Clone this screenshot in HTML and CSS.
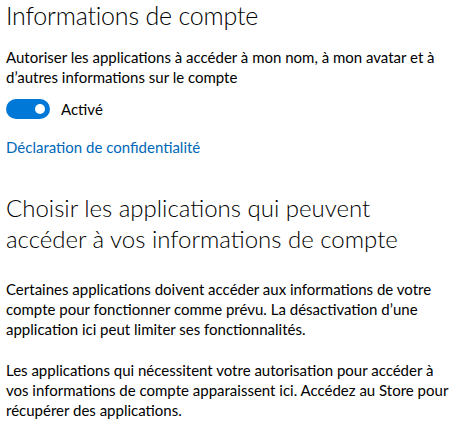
FILE: index.html
```html
<!DOCTYPE html>
<html lang="fr">
<head>
<meta charset="utf-8">
<link rel="stylesheet" href="styles.css">
</head>
<body>
<main class="page">
  <h1 class="title">Informations de compte</h1>
  <p class="text desc">Autoriser les applications à accéder à mon nom, à mon avatar et à d’autres informations sur le compte</p>
  <div class="toggle-row">
    <span class="toggle"><span class="knob"></span></span>
    <span class="toggle-label">Activé</span>
  </div>
  <a class="link" href="#">Déclaration de confidentialité</a>
  <h2 class="subtitle">Choisir les applications qui peuvent accéder à vos informations de compte</h2>
  <p class="text para1">Certaines applications doivent accéder aux informations de votre compte pour fonctionner comme prévu. La désactivation d’une application ici peut limiter ses fonctionnalités.</p>
  <p class="text para2">Les applications qui nécessitent votre autorisation pour accéder à vos informations de compte apparaissent ici. Accédez au Store pour récupérer des applications.</p>
</main>
</body>
</html>
```
FILE: styles.css
```css
html, body {
  margin: 0;
  padding: 0;
  background: #ffffff;
}
body {
  font-family: Lato, "Noto Sans", sans-serif;
  color: #000000;
}
.page {
  display: flex;
  flex-direction: column;
  align-items: flex-start;
  padding: 0 10px 0 6px;
  width: 444px;
}
.title {
  margin: 0;
  font-size: 25px;
  font-weight: 300;
  line-height: 30px;
  letter-spacing: -0.2px;
}
.text {
  margin: 0;
  font-size: 15px;
  line-height: 20px;
}
.desc {
  margin-top: 17px;
}
.toggle-row {
  display: flex;
  align-items: center;
  gap: 11px;
  margin-top: 12px;
}
.toggle {
  width: 44px;
  height: 20px;
  border-radius: 10px;
  background: #0078d7;
  display: flex;
  align-items: center;
  justify-content: flex-end;
  padding-right: 5px;
  box-sizing: border-box;
}
.knob {
  width: 10px;
  height: 10px;
  border-radius: 50%;
  background: #ffffff;
}
.toggle-label {
  font-size: 15px;
  line-height: 20px;
}
.link {
  margin-top: 18px;
  font-size: 15px;
  line-height: 20px;
  color: #0067b8;
  text-decoration: none;
}
.subtitle {
  margin: 35px 0 0;
  font-size: 24px;
  font-weight: 300;
  line-height: 31px;
}
.para1 {
  margin-top: 25px;
}
.para2 {
  margin-top: 21px;
}
```
